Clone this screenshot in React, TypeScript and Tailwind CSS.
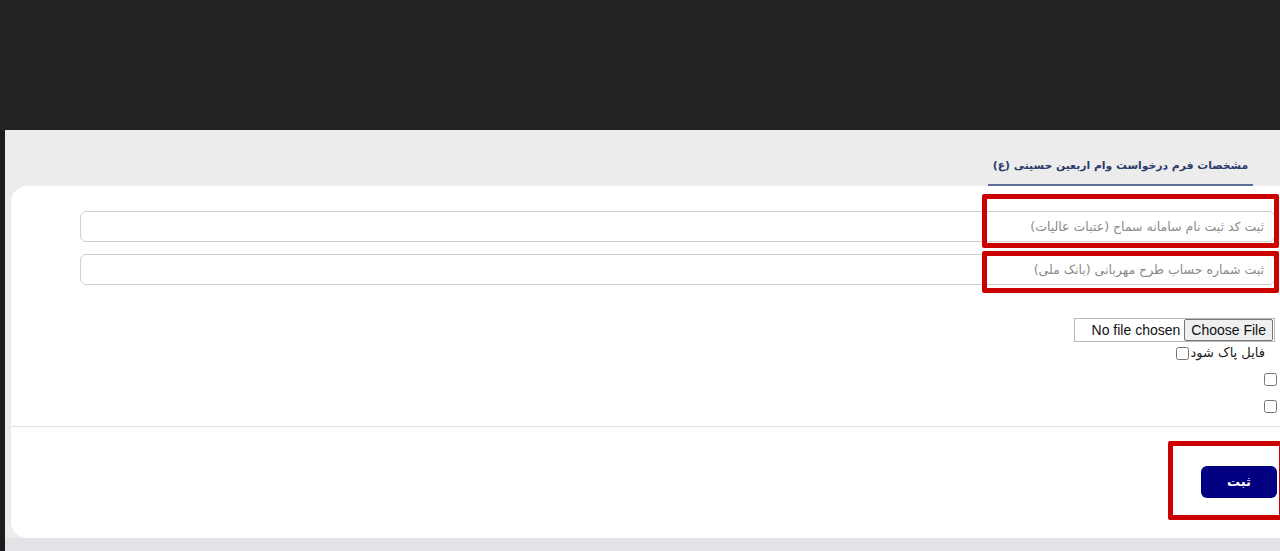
export default function App() {
  const fa = { fontFamily: '"DejaVu Sans", "Noto Sans", sans-serif' };

  return (
    <div className="relative h-[551px] w-[1280px] overflow-hidden bg-[#222222] flex flex-col">
      {/* dark top area */}
      <div className="h-[130px] shrink-0" />

      <div className="flex flex-1 min-h-0">
        <div className="w-[5px] shrink-0 bg-[#1c1c1c]" />
        <div className="flex-1 flex flex-col bg-[#ececec]">
          {/* Tab header */}
          <div dir="rtl" className="h-[56px] shrink-0 flex pr-[27px]">
            <div className="w-[265px] flex flex-col">
              <div
                className="flex-1 flex items-center justify-center pt-[19px] whitespace-nowrap text-[10.8px] font-bold text-[#2c3b6b]"
                style={fa}
              >
                مشخصات فرم درخواست وام اربعین حسینی (ع)
              </div>
              <div className="h-[2px] bg-[#5c6f99]" />
            </div>
          </div>

          {/* Card */}
          <div className="ml-[6px] h-[352px] shrink-0 bg-white rounded-l-[16px] flex flex-col">
            <div dir="rtl" className="flex flex-col pt-[25px] pr-[5px] pl-[69px]">
              <input
                type="text"
                placeholder="ثبت کد ثبت نام سامانه سماح (عتبات عالیات)"
                className="h-[31px] w-full rounded-[6px] border border-[#cfcfcf] px-[10px] text-[12.5px] text-[#444] placeholder:text-[#8a8a8a] outline-none"
                style={fa}
              />
              <input
                type="text"
                placeholder="ثبت شماره حساب طرح مهربانی (بانک ملی)"
                className="mt-[12px] h-[31px] w-full rounded-[6px] border border-[#cfcfcf] px-[10px] text-[12.5px] text-[#444] placeholder:text-[#8a8a8a] outline-none"
                style={fa}
              />
            </div>

            {/* File input block */}
            <div dir="rtl" className="flex flex-col items-start pt-[33px] pr-[5px]">
              <div
                dir="ltr"
                className="h-[24px] w-[201px] border border-[#b8b8b8] flex items-center justify-end"
                style={{ fontFamily: '"Liberation Sans", Arial, sans-serif' }}
              >
                <span className="text-[14px] text-[#111] mr-[4px]">No file chosen</span>
                <span className="h-[22px] px-[6px] mr-[1px] flex items-center bg-[#efefef] border border-[#767676] rounded-[2px] text-[14px] text-[#111]">
                  Choose File
                </span>
              </div>
              <label className="mt-[3px] mr-[10px] flex items-center h-[16px] text-[13px] text-[#222]" style={fa}>
                فایل پاک شود
                <input type="checkbox" className="w-[13px] h-[13px] m-0 mr-[1px]" />
              </label>
              <input type="checkbox" className="mt-[12px] mr-[-2px] w-[13px] h-[13px]" />
              <input type="checkbox" className="mt-[14px] mr-[-2px] w-[13px] h-[13px]" />
            </div>

            <div className="mt-[13px] h-px bg-[#e3e3e3]" />

            <div dir="rtl" className="pt-[39px] pr-[3px]">
              <button
                className="h-[32px] w-[76px] rounded-[6px] bg-[#000080] text-white text-[13px] font-bold"
                style={fa}
              >
                ثبت
              </button>
            </div>
          </div>
          <div className="flex-1 bg-[#e2e2e7]" />
        </div>
      </div>

      {/* Red annotation boxes */}
      <div className="absolute left-[982px] top-[194px] w-[297px] h-[54px] border-[5px] border-[#cc0000] rounded-[2px]" />
      <div className="absolute left-[982px] top-[251px] w-[297px] h-[42px] border-[5px] border-[#cc0000] rounded-[2px]" />
      <div className="absolute left-[1168px] top-[441px] w-[116px] h-[79px] border-[5px] border-[#cc0000] rounded-[2px]" />
    </div>
  );
}
